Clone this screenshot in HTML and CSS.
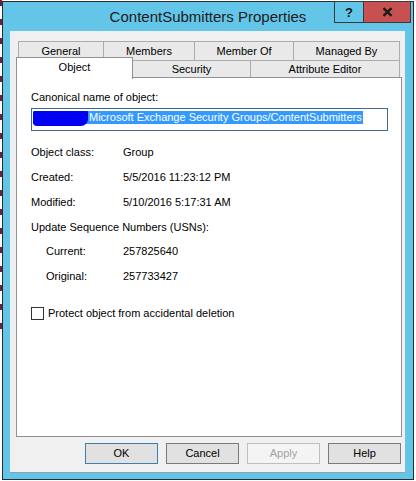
FILE: index.html
```html
<!DOCTYPE html>
<html lang="en">
<head>
<meta charset="utf-8">
<title>ContentSubmitters Properties</title>
<link rel="stylesheet" href="styles.css">
</head>
<body>
<div class="behind-edge"></div>
<div class="window">
  <div class="titlebar">
    <div class="title">ContentSubmitters Properties</div>
    <div class="caption-buttons">
      <div class="cap-btn help">?</div>
      <div class="cap-btn close">
        <svg width="11" height="10" viewBox="0 0 11 10"><path d="M1.5 1.2 L9.5 8.8 M9.5 1.2 L1.5 8.8" stroke="#1a1a1a" stroke-width="2.3" fill="none"/></svg>
      </div>
    </div>
  </div>
  <div class="client">
    <div class="tabs">
      <div class="tab-row top">
        <div class="tab t-general">General</div>
        <div class="tab t-members">Members</div>
        <div class="tab t-memberof">Member Of</div>
        <div class="tab t-managed">Managed By</div>
      </div>
      <div class="tab-row bottom">
        <div class="tab t-object selected">Object</div>
        <div class="tab t-security">Security</div>
        <div class="tab t-attr">Attribute Editor</div>
      </div>
    </div>
    <div class="panel">
      <div class="field-label">Canonical name of object:</div>
      <div class="textbox"><span class="selection"><span class="redact"></span>Microsoft Exchange Security Groups/ContentSubmitters</span></div>
      <div class="props">
        <div class="prop"><span class="k">Object class:</span><span class="v">Group</span></div>
        <div class="prop"><span class="k">Created:</span><span class="v">5/5/2016 11:23:12 PM</span></div>
        <div class="prop"><span class="k">Modified:</span><span class="v">5/10/2016 5:17:31 AM</span></div>
        <div class="prop short"><span class="k wide">Update Sequence Numbers (USNs):</span></div>
        <div class="prop indent"><span class="k">Current:</span><span class="v">257825640</span></div>
        <div class="prop indent short"><span class="k">Original:</span><span class="v">257733427</span></div>
      </div>
      <label class="check"><span class="box"></span><span>Protect object from accidental deletion</span></label>
    </div>
    <div class="buttons">
      <div class="btn default">OK</div>
      <div class="btn">Cancel</div>
      <div class="btn disabled">Apply</div>
      <div class="btn">Help</div>
    </div>
  </div>
</div>
</body>
</html>
```
FILE: styles.css
```css
html, body {
  margin: 0;
  padding: 0;
  background: #fff;
}
body {
  width: 416px;
  height: 481px;
  overflow: hidden;
  display: flex;
  align-items: flex-start;
  font-family: "Liberation Sans", Arial, sans-serif;
  font-size: 11px;
  color: #000;
}
.behind-edge {
  flex: none;
  width: 2px;
  height: 332px;
  background: repeating-linear-gradient(to bottom, #6b2047 0, #6b2047 6px, #fff 6px, #fff 19px);
}
.window {
  flex: none;
  margin-top: 1px;
  width: 410px;
  height: 477px;
  border: 1px solid #2b2b2b;
  background: #63c6e8;
  display: flex;
  flex-direction: column;
}
.titlebar {
  height: 29px;
  display: grid;
  grid-template-columns: 1fr auto 1fr;
  flex: none;
}
.title {
  grid-column: 2;
  line-height: 29px;
  font-size: 15px;
  color: #1b1b1b;
  white-space: nowrap;
}
.caption-buttons {
  grid-column: 3;
  justify-self: end;
  align-self: start;
  display: flex;
  margin: -1px 2px 0 0;
}
.cap-btn {
  box-sizing: border-box;
  height: 22px;
  border: 1px solid #3a3a3a;
  display: flex;
  align-items: center;
  justify-content: center;
}
.help {
  width: 30px;
  font-weight: bold;
  font-size: 13px;
  color: #111;
}
.close {
  width: 48px;
  margin-left: -1px;
  background: #c75050;
}
.client {
  box-sizing: border-box;
  height: 442px;
  margin: 0 8px 0 7px;
  padding: 10px 3px 0 6px;
  background: #f0f0f0;
  border-bottom: 1px solid #9a9ea8;
  display: flex;
  flex-direction: column;
}
.tabs {
  flex: none;
}
.tab-row {
  display: flex;
}
.tab-row.top {
  margin-left: 2px;
  height: 19px;
}
.tab-row.bottom {
  height: 17px;
  align-items: flex-start;
}
.tab {
  box-sizing: border-box;
  border: 1px solid #acacac;
  border-bottom: none;
  background: #e9e9e9;
  text-align: center;
  white-space: nowrap;
  flex: none;
}
.tab + .tab {
  margin-left: -1px;
}
.tab-row.top .tab {
  height: 19px;
  line-height: 18px;
}
.tab-row.bottom .tab {
  height: 17px;
  line-height: 16px;
}
.t-general { width: 86px; }
.t-members { width: 92px; }
.t-memberof { width: 100px; }
.t-managed { width: 107px; }
.t-object { width: 117px; }
.t-security { width: 119px; }
.t-attr { width: 150px; }
.tab-row.bottom .tab.selected {
  position: relative;
  z-index: 1;
  margin-top: -3px;
  height: 22px;
  line-height: 18px;
  background: #fff;
  border-color: #8f9098;
}
.panel {
  box-sizing: border-box;
  width: 386px;
  height: 360px;
  border: 1px solid #8f9098;
  background: #fff;
  padding: 13px 0 0 14px;
  flex: none;
}
.field-label {
  line-height: 13px;
}
.textbox {
  box-sizing: border-box;
  margin-top: 4px;
  width: 357px;
  height: 23px;
  border: 1px solid #3e6b8f;
  padding: 2px 0 0 1px;
  line-height: 13px;
  white-space: nowrap;
}
.selection {
  display: inline-block;
  background: #3399ff;
  color: #fff;
  height: 13px;
  padding-right: 1px;
}
.redact {
  display: inline-block;
  width: 55px;
  height: 15px;
  margin-right: 1px;
  vertical-align: top;
  background: #0000f2;
  border-radius: 2px 1px 7px 4px;
}
.props {
  margin-top: 9px;
}
.prop {
  display: grid;
  grid-template-columns: 92px auto;
  height: 25px;
  line-height: 25px;
}
.prop.short {
  height: 24px;
  line-height: 24px;
}
.prop.indent {
  grid-template-columns: 77px auto;
  padding-left: 15px;
}
.k.wide {
  grid-column: 1 / span 2;
}
.check {
  display: flex;
  align-items: center;
  margin-top: 19px;
  line-height: 13px;
}
.box {
  box-sizing: border-box;
  width: 13px;
  height: 13px;
  border: 1px solid #333;
  background: #fff;
  margin-right: 4px;
}
.buttons {
  display: flex;
  justify-content: flex-end;
  gap: 8px;
  margin: 6px 1px 0 0;
}
.btn {
  box-sizing: border-box;
  width: 73px;
  height: 21px;
  line-height: 19px;
  text-align: center;
  border: 1px solid #7a7a7a;
  background: #e1e1e1;
}
.btn.default {
  border-color: #3c7fb1;
}
.btn.disabled {
  border-color: #bfbfbf;
  background: #f4f4f4;
  color: #a3a3a3;
}
```
